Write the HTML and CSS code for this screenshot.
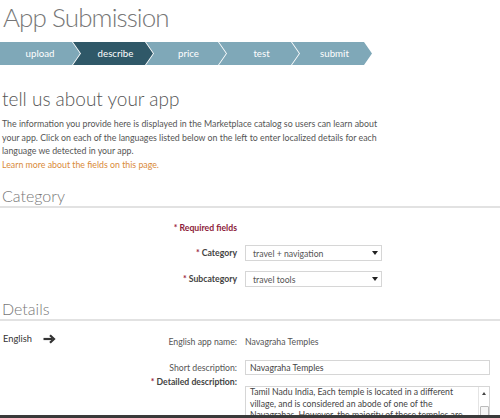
FILE: index.html
```html
<!DOCTYPE html>
<html lang="en">
<head>
<meta charset="utf-8">
<title>App Submission</title>
<link rel="stylesheet" href="styles.css">
</head>
<body>
<div class="page">
  <h1 class="title">App Submission</h1>

  <ol class="steps">
    <li class="step">upload</li>
    <li class="step current">describe</li>
    <li class="step">price</li>
    <li class="step">test</li>
    <li class="step">submit</li>
  </ol>

  <h2 class="intro-title">tell us about your app</h2>
  <p class="intro">The information you provide here is displayed in the Marketplace catalog so users can learn about<br>your app. Click on each of the languages listed below on the left to enter localized details for each<br>language we detected in your app.</p>
  <a class="learn" href="#">Learn more about the fields on this page.</a>

  <h2 class="section section-category">Category</h2>
  <div class="form category-form">
    <div class="label required-note"><span class="star">*</span> Required fields</div>
    <div></div>

    <label class="label strong"><span class="star">*</span> Category</label>
    <div class="select"><span>travel + navigation</span><span class="caret"></span></div>

    <label class="label strong"><span class="star">*</span> Subcategory</label>
    <div class="select"><span>travel tools</span><span class="caret"></span></div>
  </div>

  <h2 class="section section-details">Details</h2>
  <div class="details">
    <div class="lang">
      <span>English</span>
      <svg class="arrow" width="13" height="10" viewBox="0 0 13 10" aria-hidden="true">
        <path d="M0.5 5h9" stroke="#333" stroke-width="2.2"/>
        <path d="M7 1.2L11 5l-4 3.8" fill="none" stroke="#333" stroke-width="2.2" stroke-linejoin="miter"/>
      </svg>
    </div>
    <div class="form detail-form">
      <div class="label">English app name:</div>
      <div class="value">Navagraha Temples</div>

      <label class="label">Short description:</label>
      <div class="input">Navagraha Temples</div>

      <label class="label strong desc-label"><span class="star">*</span> Detailed description:</label>
      <div class="textarea">
        <div class="ta-text">Tamil Nadu India, Each temple is located in a different village, and is considered an abode of one of the Navagrahas. However, the majority of these temples are dedicated to Lord Shiva.</div>
        <div class="ta-scroll">
          <span class="ta-up"></span>
          <span class="ta-thumb"></span>
        </div>
      </div>
    </div>
  </div>
</div>
</body>
</html>
```

FILE: styles.css
```css
* { box-sizing: border-box; }

html, body {
  margin: 0;
  padding: 0;
  background: #fff;
}

body {
  font-family: Lato, "Open Sans", "Liberation Sans", sans-serif;
  color: #555;
}

.page {
  height: 418px;
  overflow: hidden;
  border-bottom: 3px solid #3a3a3a;
  padding: 0 0 0 2px;
}

/* page title */
.title {
  margin: 0;
  padding: 0 0 0 1px;
  font-size: 26px;
  font-weight: 300;
  line-height: 34px;
  letter-spacing: -0.9px;
  color: #777;
}

/* wizard breadcrumb */
.steps {
  list-style: none;
  margin: 8px 0 0 -2px;
  padding: 0;
  display: flex;
  height: 23px;
}

.step {
  width: 80px;
  height: 23px;
  margin-left: -7px;
  background: #7fa8b8;
  color: #fff;
  font-size: 9.7px;
  line-height: 23px;
  text-align: center;
  padding-left: 5px;
  clip-path: polygon(0 0, 72px 0, 80px 50%, 72px 100%, 0 100%, 8px 50%);
}

.step:first-child {
  margin-left: 0;
  clip-path: polygon(0 0, 72px 0, 80px 50%, 72px 100%, 0 100%);
  padding-left: 0;
}

.step.current {
  background: #2f5868;
}

/* intro */
.intro-title {
  margin: 23px 0 0;
  font-size: 19px;
  font-weight: 300;
  line-height: 22px;
  color: #555;
}

.intro {
  margin: 7px 0 0;
  font-size: 8.8px;
  line-height: 13.5px;
  color: #555;
  white-space: nowrap;
}

.learn {
  display: block;
  margin-top: 0;
  font-size: 8.8px;
  line-height: 13.5px;
  color: #d98a3a;
  text-decoration: none;
}

/* section headings */
.section {
  margin: 15px 0 0 -2px;
  padding: 0 0 0 2px;
  font-size: 16px;
  font-weight: 300;
  line-height: 20px;
  color: #777;
  border-bottom: 2px solid #e2e2e2;
}

.section-details {
  margin-top: 12px;
}

/* label / field grids */
.form {
  display: grid;
  grid-template-columns: 235px 1fr;
  column-gap: 8px;
  align-items: center;
}

.label {
  text-align: right;
  font-size: 8.7px;
  line-height: 14px;
  color: #555;
}

.label.strong {
  font-weight: 700;
  color: #444;
}

.star {
  color: #9b1c3c;
}

.required-note {
  font-weight: 700;
  color: #8c1b3a;
  margin: 13px 0 0;
}

.category-form {
  row-gap: 10px;
}

.select {
  width: 137px;
  height: 16px;
  border: 1px solid #d6d6d6;
  display: flex;
  align-items: center;
  justify-content: space-between;
  padding: 0 3px 0 7px;
  font-size: 8.7px;
  color: #555;
}

.caret {
  width: 0;
  height: 0;
  border-left: 3px solid transparent;
  border-right: 3px solid transparent;
  border-top: 4px solid #222;
}

.details {
  display: flex;
  align-items: flex-start;
  margin-top: 11px;
}

.lang {
  width: 100px;
  flex: none;
  display: flex;
  align-items: center;
  gap: 11px;
  font-size: 9.3px;
  line-height: 14px;
  color: #333;
  padding-left: 1px;
}

.arrow {
  display: block;
}

.detail-form {
  grid-template-columns: 135px 1fr;
  row-gap: 11px;
  padding-top: 3px;
}

.value {
  font-size: 8.7px;
  line-height: 14px;
  color: #555;
}

.input {
  width: 245px;
  height: 15px;
  border: 1px solid #d6d6d6;
  padding: 0 4px;
  font-size: 8.7px;
  line-height: 13px;
  color: #444;
}

.desc-label {
  align-self: start;
  margin-top: -11px;
}

.textarea {
  width: 245px;
  height: 40px;
  border: 1px solid #d6d6d6;
  display: flex;
  align-self: start;
}

.ta-text {
  flex: 1;
  margin-top: -1px;
  padding: 0 4px;
  font-size: 8.7px;
  line-height: 11.5px;
  color: #444;
  overflow: hidden;
}

.ta-scroll {
  width: 11px;
  flex: none;
  border-left: 1px solid #e4e4e4;
  display: flex;
  flex-direction: column;
  align-items: center;
  padding-top: 5px;
  gap: 11px;
}

.ta-up {
  width: 0;
  height: 0;
  border-left: 2px solid transparent;
  border-right: 2px solid transparent;
  border-bottom: 3px solid #444;
}

.ta-thumb {
  width: 9px;
  height: 14px;
  border: 1px solid #bbb;
  border-radius: 1px;
  background: #f6f6f6;
}
```
